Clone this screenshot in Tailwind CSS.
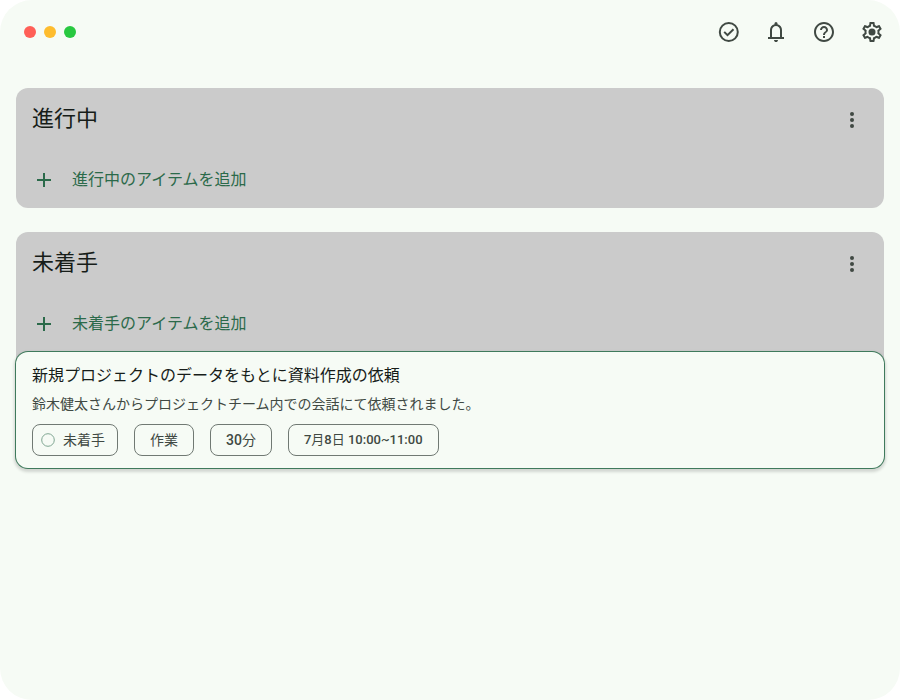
<!DOCTYPE html>
<html lang="ja">
<head>
  <meta charset="UTF-8">
  <meta name="viewport" content="width=device-width, initial-scale=1.0">
  <title>タスク</title>
  <script src="https://cdn.jsdelivr.net/npm/@tailwindcss/browser@4"></script>
</head>
<body class="bg-white font-['Roboto','Noto_Sans_CJK_JP',sans-serif] text-[#171d19]">

  <div class="min-h-screen rounded-[32px] bg-[#f6fbf5]">

    <header class="flex h-16 items-center justify-between pr-4 pl-6">
      <div class="flex gap-2">
        <button class="size-3 rounded-full bg-[#ff5f57]" aria-label="閉じる"></button>
        <button class="size-3 rounded-full bg-[#febc2e]" aria-label="最小化"></button>
        <button class="size-3 rounded-full bg-[#28c840]" aria-label="最大化"></button>
      </div>
      <nav class="flex gap-6 text-[#404943]">
        <button aria-label="完了">
          <svg class="size-6" viewBox="0 0 24 24" fill="none" stroke="currentColor" stroke-width="2">
            <circle cx="12.8" cy="12" r="9" />
            <path d="M8.2 11.9l3.3 3.3 6-6" />
          </svg>
        </button>
        <button aria-label="通知">
          <svg class="size-6" viewBox="0 0 24 24" fill="currentColor">
            <path d="M4 19v-2h2v-7q0-2.075 1.25-3.687Q8.5 4.7 10.5 4.2v-.7q0-.625.438-1.063Q11.375 2 12 2t1.063.438q.437.437.437 1.062v.7q2 .5 3.25 2.113Q18 7.925 18 10v7h2v2H4Zm8 3q-.825 0-1.412-.587Q10 20.825 10 20h4q0 .825-.587 1.413Q12.825 22 12 22Zm-4-5h8v-7q0-1.65-1.175-2.825Q13.65 6 12 6q-1.65 0-2.825 1.175Q8 8.35 8 10v7Z" />
          </svg>
        </button>
        <button aria-label="ヘルプ">
          <svg class="size-6" viewBox="0 0 24 24" fill="currentColor">
            <path d="M11 18h2v-2h-2v2zm1-16C6.48 2 2 6.48 2 12s4.48 10 10 10 10-4.48 10-10S17.52 2 12 2zm0 18c-4.41 0-8-3.59-8-8s3.59-8 8-8 8 3.59 8 8-3.59 8-8 8zm0-14c-2.21 0-4 1.79-4 4h2c0-1.1.9-2 2-2s2 .9 2 2c0 2-3 1.75-3 5h2c0-2.25 3-2.5 3-5 0-2.21-1.79-4-4-4z" />
          </svg>
        </button>
        <button aria-label="設定">
          <svg class="size-6" viewBox="0 0 24 24" fill="currentColor">
            <path d="M19.43 12.98c.04-.32.07-.64.07-.98 0-.34-.03-.66-.07-.98l2.11-1.65c.19-.15.24-.42.12-.64l-2-3.46c-.09-.16-.26-.25-.44-.25-.06 0-.12.01-.17.03l-2.49 1c-.52-.4-1.08-.73-1.69-.98l-.38-2.65C14.46 2.18 14.25 2 14 2h-4c-.25 0-.46.18-.49.42l-.38 2.65c-.61.25-1.17.59-1.69.98l-2.49-1c-.06-.02-.12-.03-.18-.03-.17 0-.34.09-.43.25l-2 3.46c-.13.22-.07.49.12.64l2.11 1.65c-.04.32-.07.65-.07.98 0 .33.03.66.07.98l-2.11 1.65c-.19.15-.24.42-.12.64l2 3.46c.09.16.26.25.44.25.06 0 .12-.01.17-.03l2.49-1c.52.4 1.08.73 1.69.98l.38 2.65c.03.24.24.42.49.42h4c.25 0 .46-.18.49-.42l.38-2.65c.61-.25 1.17-.59 1.69-.98l2.49 1c.06.02.12.03.18.03.17 0 .34-.09.43-.25l2-3.46c.12-.22.07-.49-.12-.64l-2.11-1.65zm-1.98-1.71c.04.31.05.52.05.73 0 .21-.02.43-.05.73l-.14 1.13.89.7 1.08.84-.7 1.21-1.27-.51-1.04-.42-.9.68c-.43.32-.84.56-1.25.73l-1.06.43-.16 1.13-.2 1.35h-1.4l-.19-1.35-.16-1.13-1.06-.43c-.43-.18-.83-.41-1.23-.71l-.91-.7-1.06.43-1.27.51-.7-1.21 1.08-.84.89-.7-.14-1.13c-.03-.31-.05-.54-.05-.74s.02-.43.05-.73l.14-1.13-.89-.7-1.08-.84.7-1.21 1.27.51 1.04.42.9-.68c.43-.32.84-.56 1.25-.73l1.06-.43.16-1.13.2-1.35h1.39l.19 1.35.16 1.13 1.06.43c.43.18.83.41 1.23.71l.91.7 1.06-.43 1.27-.51.7 1.21-1.07.85-.89.7.14 1.13z" />
            <circle cx="12" cy="12" r="3.5" />
          </svg>
        </button>
      </nav>
    </header>

    <main class="flex flex-col gap-6 px-4 py-6">

      <section class="rounded-xl bg-[#cbcbcb]">
        <div class="flex h-16 items-center justify-between px-4">
          <h2 class="pb-0.5 text-[22px] leading-7">進行中</h2>
          <button class="mr-1 text-[#404943]" aria-label="進行中のメニュー">
            <svg class="size-6" viewBox="0 0 24 24" fill="currentColor">
              <circle cx="12" cy="6" r="2" />
              <circle cx="12" cy="12" r="2" />
              <circle cx="12" cy="18" r="2" />
            </svg>
          </button>
        </div>
        <button class="flex h-14 w-full items-center gap-4 px-4 text-base text-[#2b6a4a]">
          <svg class="size-6" viewBox="0 0 24 24" fill="none" stroke="currentColor" stroke-width="2">
            <path d="M5 12h14M12 5v14" />
          </svg>
          進行中のアイテムを追加
        </button>
      </section>

      <section class="rounded-xl bg-[#cbcbcb]">
        <div class="flex h-16 items-center justify-between px-4">
          <h2 class="pb-0.5 text-[22px] leading-7">未着手</h2>
          <button class="mr-1 text-[#404943]" aria-label="未着手のメニュー">
            <svg class="size-6" viewBox="0 0 24 24" fill="currentColor">
              <circle cx="12" cy="6" r="2" />
              <circle cx="12" cy="12" r="2" />
              <circle cx="12" cy="18" r="2" />
            </svg>
          </button>
        </div>
        <button class="flex h-14 w-full items-center gap-4 px-4 text-base text-[#2b6a4a]">
          <svg class="size-6" viewBox="0 0 24 24" fill="none" stroke="currentColor" stroke-width="2">
            <path d="M5 12h14M12 5v14" />
          </svg>
          未着手のアイテムを追加
        </button>

        <article class="rounded-xl bg-[#f6fbf5] px-4 py-3 shadow-[0_2px_3px_2px_rgba(0,0,0,0.15)] ring-1 ring-[#3f7a5c]">
          <h3 class="text-base leading-6">新規プロジェクトのデータをもとに資料作成の依頼</h3>
          <p class="mt-1 text-sm leading-6 text-[#404943]">鈴木健太さんからプロジェクトチーム内での会話にて依頼されました。</p>
          <div class="mt-2 flex flex-wrap gap-4 text-sm text-[#404943]">
            <button class="flex h-8 items-center gap-2 rounded-lg border border-[#707973] pr-3 pl-2">
              <svg class="size-[14px] text-[#7fa692]" viewBox="0 0 14 14" fill="none" stroke="currentColor">
                <circle cx="7" cy="7" r="6.3" />
              </svg>
              未着手
            </button>
            <button class="h-8 rounded-lg border border-[#707973] px-[15px]">作業</button>
            <button class="h-8 rounded-lg border border-[#707973] px-[15px]"><span class="font-medium">30</span>分</button>
            <button class="h-8 rounded-lg border border-[#707973] px-[15px] text-[13px]"><span class="font-medium">7</span>月<span class="font-medium">8</span>日 <span class="font-medium">10:00~11:00</span></button>
          </div>
        </article>
      </section>

    </main>
  </div>

</body>
</html>
